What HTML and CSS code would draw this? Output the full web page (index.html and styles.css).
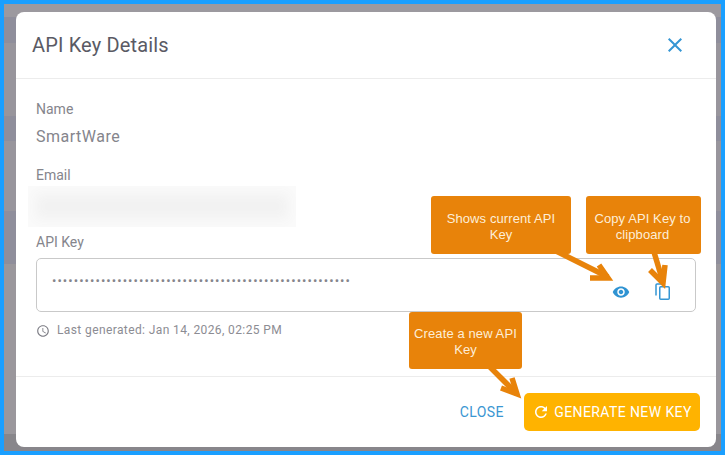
FILE: index.html
```html
<!DOCTYPE html>
<html lang="en">
<head>
    <meta charset="UTF-8">
    <title>API Key Details</title>
    <link rel="stylesheet" href="styles.css">
</head>
<body>
    <div class="frame">
        <div class="dialog">
            <div class="header">
                <h2>API Key Details</h2>
                <button class="close-x" aria-label="Close">
                    <svg width="24" height="24" viewBox="0 0 24 24"><path d="M19 6.41 17.59 5 12 10.59 6.41 5 5 6.41 10.59 12 5 17.59 6.41 19 12 13.41 17.59 19 19 17.59 13.41 12z"/></svg>
                </button>
            </div>

            <div class="body">
                <div class="label">Name</div>
                <div class="value">SmartWare</div>
                <div class="label email-label">Email</div>
                <div class="blurred"></div>
                <div class="label key-label">API Key</div>
                <div class="key-box">
                    <span class="dots">•••••••••••••••••••••••••••••••••••••••••••••••••••••••</span>
                    <span class="key-icons">
                        <svg width="18" height="18" viewBox="0 0 24 24"><path d="M12 4.5C7 4.5 2.73 7.61 1 12c1.73 4.39 6 7.5 11 7.5s9.27-3.11 11-7.5c-1.73-4.39-6-7.5-11-7.5M12 17c-2.76 0-5-2.24-5-5s2.24-5 5-5 5 2.24 5 5-2.24 5-5 5m0-8c-1.66 0-3 1.34-3 3s1.34 3 3 3 3-1.34 3-3-1.34-3-3-3"/></svg>
                        <svg class="copy-icon" width="16" height="17" viewBox="0 0 16 17"><path d="M1 12.500V2a1 1 0 0 1 1-1h7"/><rect x="4.750" y="3.750" width="9.500" height="12.500" rx="1"/></svg>
                    </span>
                </div>
                <div class="generated">
                    <svg width="14" height="14" viewBox="0 0 24 24"><path d="M11.99 2C6.47 2 2 6.480 2 12s4.470 10 9.990 10C17.520 22 22 17.520 22 12S17.520 2 11.990 2M12 20c-4.420 0-8-3.580-8-8s3.580-8 8-8 8 3.580 8 8-3.580 8-8 8m.5-13H11v6l5.250 3.150.75-1.230-4.500-2.670z"/></svg>
                    <span>Last generated: Jan 14, 2026, 02:25 PM</span>
                </div>
            </div>

            <div class="footer">
                <button class="btn-close">CLOSE</button>
                <button class="btn-generate">
                    <svg width="18" height="18" viewBox="0 0 24 24"><path d="M17.650 6.350C16.200 4.900 14.210 4 12 4c-4.420 0-7.990 3.580-7.990 8s3.570 8 7.990 8c3.730 0 6.840-2.550 7.730-6h-2.080c-.82 2.330-3.040 4-5.650 4-3.310 0-6-2.690-6-6s2.690-6 6-6c1.660 0 3.140.69 4.220 1.780L13 11h7V4z"/></svg>
                    GENERATE NEW KEY
                </button>
            </div>
        </div>

        <!-- annotations drawn on top of the screenshot -->
        <svg class="arrows" width="725" height="455" viewBox="0 0 725 455">
            <path d="M556 251 L608 277"/>
            <path d="M599 265 L608 278 L590 278"/>
            <path d="M654 252 L663 282"/>
            <path d="M650 270 L663 283 L665 265"/>
            <path d="M490 367 L517 394"/>
            <path d="M501 388 L517 394 L512 378"/>
        </svg>
        <div class="note note-show">Shows current API Key</div>
        <div class="note note-copy">Copy API Key to clipboard</div>
        <div class="note note-new">Create a new API Key</div>
    </div>
</body>
</html>
```
FILE: styles.css
```css
*{
    box-sizing: border-box;
}
html,body{
    margin: 0;
    height: 100%;
}
body{
    font-family: Roboto, "Liberation Sans", sans-serif;
    overflow: hidden;
}
button{
    font-family: inherit;
    background: none;
    border: none;
    padding: 0;
}

.frame{
    position: relative;
    width: 725px;
    height: 455px;
    border: 4px solid #1a9fff;
    padding: 8px 5px 0 12px;
    background: linear-gradient(#9c999f 0, #9c999f 13px, #8f8e9b 13px, #8f8e9b 39px, #98959c 39px, #98959c 112px, #8f8e9b 112px, #8f8e9b 137px, #98959c 137px, #98959c 207px, #8f8e9b 207px, #8f8e9b 260px, #9a979c 260px, #9a979c 430px, #88868b 430px);
}

.dialog{
    width: 700px;
    height: 435px;
    background: #ffffff;
    border-radius: 8px;
    display: flex;
    flex-direction: column;
}

.header{
    height: 67px;
    padding: 0 29px 0 16px;
    border-bottom: 1px solid #ececec;
    display: flex;
    align-items: center;
    justify-content: space-between;
}
.header h2{
    margin: 0;
    font-size: 20px;
    font-weight: 400;
    color: #5a5a64;
    letter-spacing: 0.15px;
}
.close-x{
    display: flex;
}
.close-x svg{
    fill: #3596d4;
}

.body{
    height: 298px;
    padding: 21px 20px 0;
    border-bottom: 1px solid #ececec;
}
.label{
    font-size: 14px;
    line-height: 18px;
    color: #85858c;
}
.value{
    margin-top: 9px;
    font-size: 16px;
    line-height: 20px;
    letter-spacing: 0.5px;
    color: #85858c;
}
.email-label{
    margin-top: 19px;
}
.blurred{
    width: 268px;
    height: 41px;
    margin: 2px 0 0 -8px;
    background: #f2f2f2;
    box-shadow: inset 0 0 12px 8px #fafafa;
}
.key-label{
    margin-top: 6px;
}
.key-box{
    height: 54px;
    margin-top: 7px;
    padding: 0 24px 0 15px;
    border: 1px solid #c9c9c9;
    border-radius: 5px;
    display: flex;
    align-items: center;
    justify-content: space-between;
}
.dots{
    font-size: 13px;
    line-height: 16px;
    letter-spacing: 1.05px;
    color: #85858c;
    margin-top: -9px;
}
.key-icons{
    display: flex;
    align-items: center;
    gap: 25px;
    margin-top: 13px;
}
.key-icons svg{
    fill: #2f93d2;
}
.key-icons .copy-icon{
    fill: none;
    stroke: #3596d4;
    stroke-width: 1.5;
}
.generated{
    margin-top: 10px;
    display: flex;
    align-items: center;
    gap: 7px;
    font-size: 12px;
    letter-spacing: 0.39px;
    color: #8c8c93;
}
.generated svg{
    fill: #7c7c84;
    margin-top: 2px;
}

.footer{
    flex: 1;
    padding: 0 16px 16px 0;
    display: flex;
    align-items: flex-end;
    justify-content: flex-end;
    gap: 20px;
}
.btn-close{
    height: 38px;
    font-size: 14px;
    font-weight: 400;
    letter-spacing: 0.45px;
    color: #3a96d2;
}
.btn-generate{
    width: 176px;
    height: 38px;
    background: #ffb300;
    border-radius: 5px;
    display: flex;
    align-items: center;
    justify-content: center;
    gap: 4px;
    font-size: 14px;
    font-weight: 400;
    letter-spacing: 0.4px;
    color: #ffffff;
}
.btn-generate svg{
    fill: #ffffff;
}

.arrows{
    position: absolute;
    left: -4px;
    top: -4px;
}
.arrows path{
    fill: none;
    stroke: #e8830a;
    stroke-width: 5.5;
}
.note{
    position: absolute;
    background: #e8830a;
    color: #fdeed8;
    border-radius: 3px;
    font-family: "Liberation Sans", Arial, sans-serif;
    font-size: 13px;
    line-height: 16px;
    letter-spacing: 0.1px;
    text-align: center;
    display: flex;
    align-items: center;
    justify-content: center;
}
.note-show{
    left: 427px;
    top: 192px;
    width: 140px;
    height: 58px;
    padding: 3px 12px 0;
}
.note-copy{
    left: 582px;
    top: 192px;
    width: 115px;
    height: 58px;
    padding: 3px 8px 0 6px;
}
.note-new{
    left: 405px;
    top: 308px;
    width: 113px;
    height: 57px;
    padding: 2px 2px 0;
}
```
